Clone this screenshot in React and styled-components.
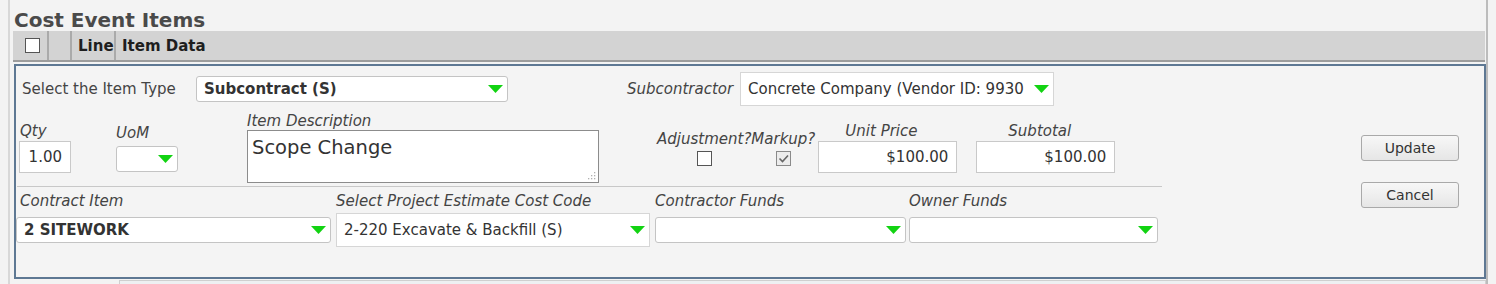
import React from 'react';
import styled, { createGlobalStyle } from 'styled-components';

const GlobalStyle = createGlobalStyle`
  html, body {
    margin: 0;
    padding: 0;
    background: #f3f3f3;
  }
  body {
    font-family: "DejaVu Sans", Verdana, sans-serif;
    color: #333;
  }
`;

const Page = styled.div`
  box-sizing: border-box;
  margin-left: 8px;
  width: 1480px;
  height: 284px;
  padding-left: 3px;
  border-left: 2px solid #d8d8d8;
  border-right: 2px solid #bcbcbc;
  overflow: hidden;
`;

const Title = styled.h2`
  margin: 0;
  height: 31px;
  padding: 9px 0 0 1px;
  box-sizing: border-box;
  font-size: 20px;
  line-height: 22px;
  font-weight: bold;
  color: #4a4a4a;
`;

const HeadBar = styled.div`
  display: flex;
  box-sizing: border-box;
  width: 1472px;
  height: 31px;
  background: #d3d3d3;
  border-bottom: 2px solid #9c9c9c;
`;

const HeadCell = styled.div`
  display: flex;
  align-items: center;
  box-sizing: border-box;
  width: ${p => (p.$w ? `${p.$w}px` : 'auto')};
  flex: ${p => (p.$w ? 'none' : '1')};
  padding-left: ${p => p.$pad || 0}px;
  border-right: ${p => (p.$last ? 'none' : '2px solid #aaaaaa')};
  font-size: 15px;
  font-weight: bold;
  color: #1e1e1e;
`;

const Box = styled.span`
  display: inline-block;
  box-sizing: border-box;
  width: 15px;
  height: 15px;
  border: 1px solid ${p => (p.$checked ? '#8a8a8a' : '#555')};
  background: ${p => (p.$checked ? '#ececec' : '#fff')};
  position: relative;
`;

const Panel = styled.div`
  display: flex;
  box-sizing: border-box;
  margin: 2px 0 0 1px;
  width: 1472px;
  height: 215px;
  border: 2px solid #5e7893;
  background: #f4f4f4;
`;

const Main = styled.div`
  width: 1146px;
  padding-top: 6px;
`;

const Row = styled.div`
  display: flex;
  align-items: ${p => p.$align || 'center'};
  height: ${p => p.$h}px;
  margin-top: ${p => p.$mt || 0}px;
`;

const Field = styled.div`
  display: flex;
  flex-direction: column;
  align-items: ${p => (p.$center ? 'center' : 'flex-start')};
  margin-left: ${p => p.$ml || 0}px;
  width: ${p => (p.$w ? `${p.$w}px` : 'auto')};
`;

const Label = styled.div`
  font-size: ${p => p.$fs || 15}px;
  font-style: ${p => (p.$plain ? 'normal' : 'italic')};
  line-height: 18px;
  color: #444;
  white-space: nowrap;
  padding-left: ${p => p.$pad || 0}px;
  margin-bottom: ${p => p.$mb || 0}px;
  width: ${p => (p.$w ? `${p.$w}px` : 'auto')};
`;

const Slot = styled.div`
  display: flex;
  align-items: center;
  height: ${p => p.$h || 34}px;
`;

const Select = styled.div`
  display: flex;
  align-items: center;
  box-sizing: border-box;
  width: ${p => p.$w}px;
  height: ${p => p.$h || 26}px;
  padding: 0 4px 0 7px;
  background: #fff;
  border: 1px solid ${p => (p.$square ? '#d6d6d6' : '#c4c4c4')};
  border-radius: ${p => (p.$square ? 0 : 3)}px;
  font-size: 15px;
  font-weight: ${p => (p.$bold ? 'bold' : 'normal')};
  color: #333;
`;

const SelectText = styled.span`
  flex: 1;
  overflow: hidden;
  white-space: nowrap;
`;

const Input = styled.div`
  box-sizing: border-box;
  width: ${p => p.$w}px;
  height: 32px;
  padding: 0 8px;
  background: #fff;
  border: 1px solid #c9c9c9;
  font-size: 15px;
  line-height: 31px;
  text-align: right;
  color: #333;
`;

const TextArea = styled.div`
  position: relative;
  box-sizing: border-box;
  width: 352px;
  height: 53px;
  padding: 5px 4px;
  background: #fff;
  border: 1px solid #8c8c8c;
  font-size: 19.5px;
  line-height: 24px;
  color: #333;
`;

const Grip = styled.svg`
  position: absolute;
  right: 2px;
  bottom: 2px;
`;

const Separator = styled.div`
  margin: 3px 0 0 1px;
  width: 1145px;
  border-top: 1px solid #c8c8c8;
`;

const Actions = styled.div`
  display: flex;
  flex-direction: column;
  gap: 21px;
  margin-left: 199px;
  padding-top: 69px;
`;

const Button = styled.button`
  box-sizing: border-box;
  width: 98px;
  height: 26px;
  padding: 0;
  border: 1px solid #a9a9a9;
  border-radius: 3px;
  background: linear-gradient(#f7f7f7, #e6e6e6);
  font-family: "DejaVu Sans", Verdana, sans-serif;
  font-size: 14px;
  color: #333;
`;

const NextRow = styled.div`
  margin: 1px 0 0 106px;
  height: 6px;
  border: 1px solid #cfcfcf;
  background: #eef0f2;
`;

const Arrow = () => (
  <svg width="15" height="8" viewBox="0 0 15 8">
    <path d="M0 0 H15 L7.5 8 Z" fill="#12d312" />
  </svg>
);

const Check = () => (
  <svg width="13" height="13" viewBox="0 0 13 13" style={{ position: 'absolute', left: 0, top: 0 }}>
    <path d="M2.5 6.5 L5.5 9.5 L11 3.5" fill="none" stroke="#666" strokeWidth="1.6" />
  </svg>
);

const Dropdown = ({ w, h, square, bold, children }) => (
  <Select $w={w} $h={h} $square={square} $bold={bold}>
    <SelectText>{children}</SelectText>
    <Arrow />
  </Select>
);

export default function App() {
  return (
    <>
      <GlobalStyle />
      <Page>
        <Title>Cost Event Items</Title>
        <HeadBar>
          <HeadCell $w={36} $pad={12}><Box /></HeadCell>
          <HeadCell $w={23} />
          <HeadCell $w={44} $pad={6}>Line</HeadCell>
          <HeadCell $pad={6} $last>Item Data</HeadCell>
        </HeadBar>

        <Panel>
          <Main>
            <Row $h={34}>
              <Label $plain $pad={6} $w={174}>Select the Item Type</Label>
              <Dropdown w={312} bold>Subcontract (S)</Dropdown>
              <Field $ml={119} $w={113}>
                <Label>Subcontractor</Label>
              </Field>
              <Dropdown w={314} h={34} square>Concrete Company (Vendor ID: 9930</Dropdown>
            </Row>

            <Row $h={71} $mt={6}>
              <Field $ml={3}>
                <Label $pad={1} $mb={1}>Qty</Label>
                <Input $w={52}>1.00</Input>
              </Field>
              <Field $ml={45}>
                <Label $mb={4}>UoM</Label>
                <Dropdown w={62} />
              </Field>
              <Field $ml={69}>
                <Label $mb={0}>Item Description</Label>
                <TextArea>
                  Scope Change
                  <Grip width="8" height="8" viewBox="0 0 8 8">
                    <g fill="#b0b0b0">
                      <rect x="6" y="0" width="1.3" height="1.3" />
                      <rect x="3" y="3" width="1.3" height="1.3" />
                      <rect x="6" y="3" width="1.3" height="1.3" />
                      <rect x="0" y="6" width="1.3" height="1.3" />
                      <rect x="3" y="6" width="1.3" height="1.3" />
                      <rect x="6" y="6" width="1.3" height="1.3" />
                    </g>
                  </Grip>
                </TextArea>
              </Field>
              <Field $ml={58} $center>
                <Label $mb={3}>Adjustment?</Label>
                <Box />
              </Field>
              <Field $center>
                <Label $mb={3}>Markup?</Label>
                <Box $checked><Check /></Box>
              </Field>
              <Field $ml={3}>
                <Label $pad={27} $mb={1}>Unit Price</Label>
                <Input $w={139}>$100.00</Input>
              </Field>
              <Field $ml={19}>
                <Label $pad={32} $mb={1}>Subtotal</Label>
                <Input $w={139}>$100.00</Input>
              </Field>
            </Row>

            <Separator />

            <Row $h={60} $mt={5} $align="flex-start">
              <Field>
                <Label $pad={4} $mb={3}>Contract Item</Label>
                <Slot><Dropdown w={315} bold>2 SITEWORK</Dropdown></Slot>
              </Field>
              <Field $ml={5}>
                <Label $mb={3}>Select Project Estimate Cost Code</Label>
                <Slot><Dropdown w={314} h={34} square>2-220 Excavate &amp; Backfill (S)</Dropdown></Slot>
              </Field>
              <Field $ml={5}>
                <Label $mb={3}>Contractor Funds</Label>
                <Slot><Dropdown w={251} /></Slot>
              </Field>
              <Field $ml={3}>
                <Label $mb={3}>Owner Funds</Label>
                <Slot><Dropdown w={249} /></Slot>
              </Field>
            </Row>
          </Main>

          <Actions>
            <Button>Update</Button>
            <Button>Cancel</Button>
          </Actions>
        </Panel>
        <NextRow />
      </Page>
    </>
  );
}
